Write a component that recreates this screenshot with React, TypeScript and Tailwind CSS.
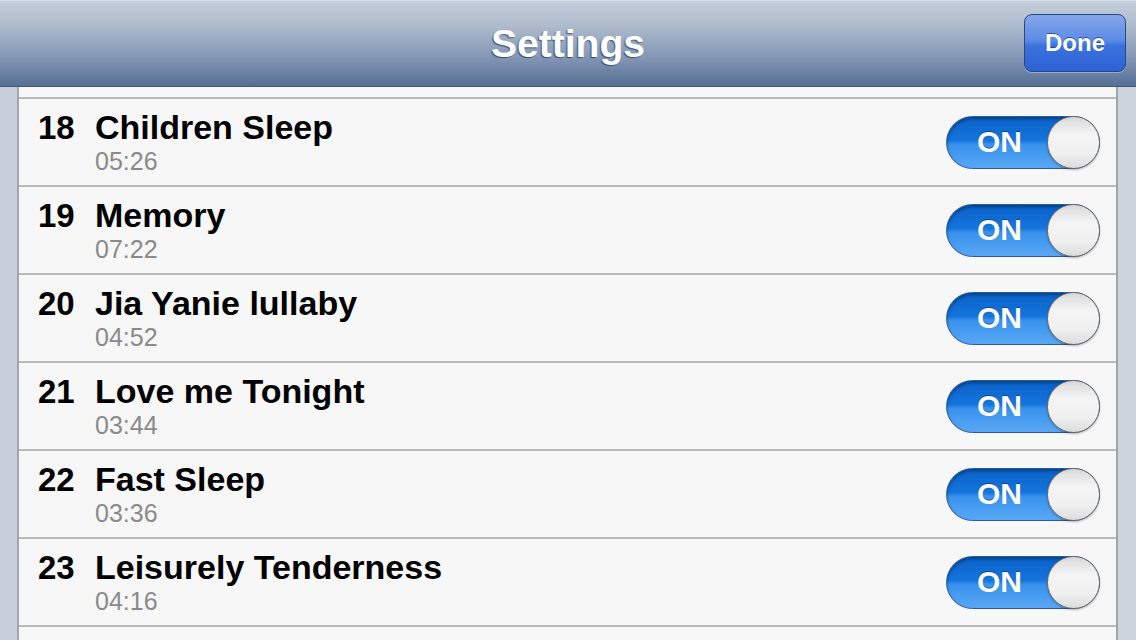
import React from 'react'

interface Track {
  no: number
  title: string
  length: string
}

const tracks: Track[] = [
  { no: 18, title: 'Children Sleep', length: '05:26' },
  { no: 19, title: 'Memory', length: '07:22' },
  { no: 20, title: 'Jia Yanie lullaby', length: '04:52' },
  { no: 21, title: 'Love me Tonight', length: '03:44' },
  { no: 22, title: 'Fast Sleep', length: '03:36' },
  { no: 23, title: 'Leisurely Tenderness', length: '04:16' },
]

const Toggle = () => (
  <div className="relative h-[53px] w-[154px] shrink-0 rounded-full border border-[#2a5c9c] bg-[linear-gradient(to_bottom,#0a60c8_0%,#1475dc_46%,#3892ed_54%,#58a8f4_100%)] shadow-[inset_0_2px_3px_rgba(0,0,0,0.35)]">
    <span className="absolute left-[30px] top-0 flex h-full items-center text-[30px] font-bold leading-none text-white [text-shadow:0_-1px_0_rgba(0,40,100,0.5)]">
      ON
    </span>
    <div className="absolute right-[-1px] top-[-1px] h-[53px] w-[53px] rounded-full border border-[#6d6d6d] bg-[linear-gradient(to_bottom,#d9d9d9_0%,#f4f4f4_35%,#f0f0f0_70%,#dcdcdc_100%)] shadow-[0_1px_2px_rgba(0,0,0,0.3)]" />
  </div>
)

const TrackRow = ({ track }: { track: Track }) => (
  <div className="flex h-[88px] items-center border-t-2 border-[#b9b9b9] pr-4">
    <div className="flex flex-1 pl-[19px] pt-px">
      <span className="w-[57px] shrink-0 text-[33px] font-bold leading-[33px] text-black">
        {track.no}
      </span>
      <div className="flex flex-col gap-[5px]">
        <span className="text-[34px] font-bold leading-[33px] text-black">{track.title}</span>
        <span className="text-[25px] leading-[25px] text-[#8a8a8a]">{track.length}</span>
      </div>
    </div>
    <Toggle />
  </div>
)

export default function App() {
  return (
    <div className="flex h-[640px] w-[1136px] flex-col overflow-hidden bg-[#f7f7f7] font-['Liberation_Sans',Helvetica,Arial,sans-serif]">
      {/* Navigation bar */}
      <header className="relative flex h-[87px] shrink-0 items-center justify-center border-t border-b border-t-[#d9e0e9] border-b-[#42597c] bg-[linear-gradient(to_bottom,#c5cedb_0%,#adbacb_30%,#8598b6_65%,#566f96_100%)]">
        <h1 className="text-[39px] font-bold leading-none text-white [text-shadow:-1px_1px_1px_rgba(30,40,60,0.65)]">
          Settings
        </h1>
        <button className="absolute right-[10px] top-[13px] flex h-[58px] w-[102px] items-center justify-center rounded-[8px] border border-[#26478a] bg-[linear-gradient(to_bottom,#85a7ea_0%,#5b8ce6_45%,#3b72de_55%,#2c62d4_100%)] text-[24px] font-bold text-white shadow-[0_1px_0_rgba(255,255,255,0.35)] [text-shadow:0_-1px_0_rgba(0,20,80,0.55)]">
          Done
        </button>
      </header>

      {/* Grouped table */}
      <div className="flex flex-1 overflow-hidden">
        <div className="w-[17px] shrink-0 bg-[#c8cfda]" />
        <div className="flex w-[1101px] shrink-0 flex-col border-x-2 border-[#a2a7af] bg-[#f7f7f7]">
          <div className="h-[10px] shrink-0" />
          {tracks.map((t) => (
            <TrackRow key={t.no} track={t} />
          ))}
          <div className="flex-1 border-t-2 border-[#b9b9b9]" />
        </div>
        <div className="flex-1 bg-[#ccd3dd]" />
      </div>
    </div>
  )
}
